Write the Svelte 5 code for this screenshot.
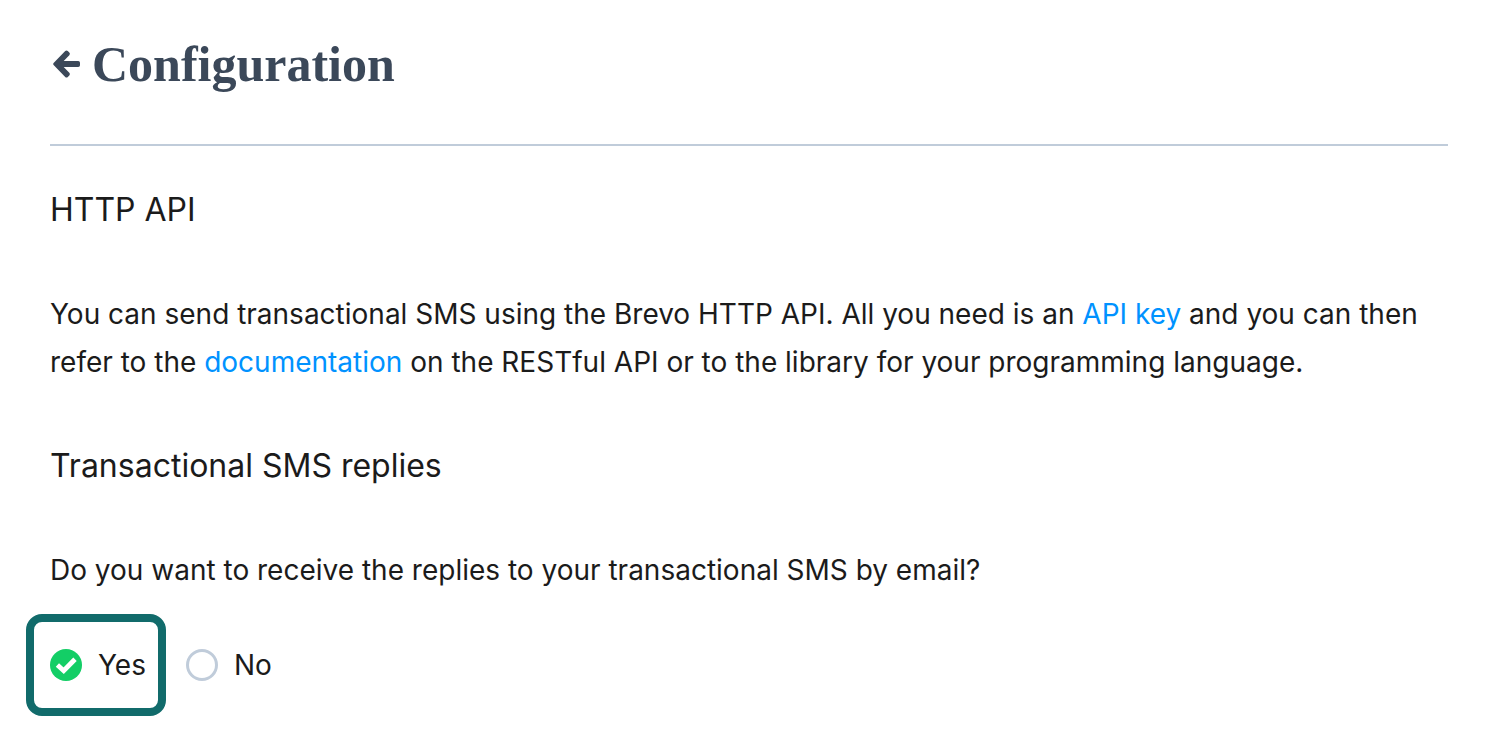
<script>
	let replies = 'yes'

	const options = [
		{ value: 'yes', label: 'Yes' },
		{ value: 'no', label: 'No' }
	]
</script>

<main>
	<header>
		<a class="back" href="#back" aria-label="Back">
			<svg viewBox="0 0 32 32" width="32" height="32" aria-hidden="true">
				<path
					d="M3.6 15 15.2 3.1q1.3-1.2 2.6 0l1.5 1.5q1.3 1.3 0 2.6L13.7 13H28.2q1.8 0 1.8 1.8v2.4q0 1.8-1.8 1.8H13.7l5.6 5.8q1.3 1.3 0 2.6l-1.5 1.5q-1.3 1.2-2.6 0L3.6 17q-1-1 0-2z"
				/>
			</svg>
		</a>
		<h1>Configuration</h1>
	</header>

	<section>
		<h2>HTTP API</h2>
		<p>
			You can send transactional SMS using the Brevo HTTP API. All you need is an
			<a href="#api-key">API key</a> and you can then refer to the
			<a href="#documentation">documentation</a> on the RESTful API or to the library for your
			programming language.
		</p>
	</section>

	<section>
		<h2>Transactional SMS replies</h2>
		<p id="question">Do you want to receive the replies to your transactional SMS by email?</p>
		<div class="options" role="radiogroup" aria-labelledby="question">
			{#each options as option}
				<label class:highlight={option.value === 'yes'}>
					<input type="radio" name="replies" value={option.value} bind:group={replies} />
					<span>{option.label}</span>
				</label>
			{/each}
		</div>
	</section>
</main>

<style>
	:global(body) {
		background: #fff;
	}
	main {
		color: #1b1b1b;
		font-family: Inter, 'Liberation Sans', sans-serif;
		font-size: 28px;
		line-height: 48px;
		padding: 32px 50px 20px;
	}
	header {
		align-items: center;
		border-bottom: 2px solid #c0ccda;
		display: flex;
		gap: 10px;
		padding-bottom: 48px;
	}
	.back {
		display: flex;
	}
	.back svg {
		fill: #3b4859;
	}
	h1 {
		color: #3b4859;
		font-family: 'Liberation Serif', serif;
		font-size: 50px;
		line-height: 64px;
		margin: 0;
	}
	section {
		padding-top: 40px;
	}
	section + section {
		padding-top: 56px;
	}
	h2 {
		font-size: 32px;
		font-weight: 400;
		line-height: 48px;
		margin: 0 0 56px;
	}
	p {
		margin: 0;
	}
	p a {
		color: #0092ff;
		text-decoration: none;
	}
	.options {
		align-items: center;
		display: flex;
		gap: 20px;
		margin: 20px 0 0 -24px;
	}
	label {
		align-items: center;
		cursor: pointer;
		display: flex;
		gap: 16px;
	}
	label.highlight {
		border: 8px solid #116b6b;
		border-radius: 16px;
		padding: 19px 12px 19px 16px;
	}
	input {
		appearance: none;
		background: #fff;
		border: 3px solid #c0ccda;
		border-radius: 50%;
		box-sizing: border-box;
		height: 32px;
		margin: 0;
		width: 32px;
	}
	input:checked {
		background: #13ce66 url("data:image/svg+xml,%3Csvg xmlns='http://www.w3.org/2000/svg' viewBox='0 0 32 32'%3E%3Cpath d='M7.4 16l6.3 5.7L25 10.2' fill='none' stroke='%23fff' stroke-width='4.8'/%3E%3C/svg%3E") center / 32px;
		border: 0;
	}
</style>
